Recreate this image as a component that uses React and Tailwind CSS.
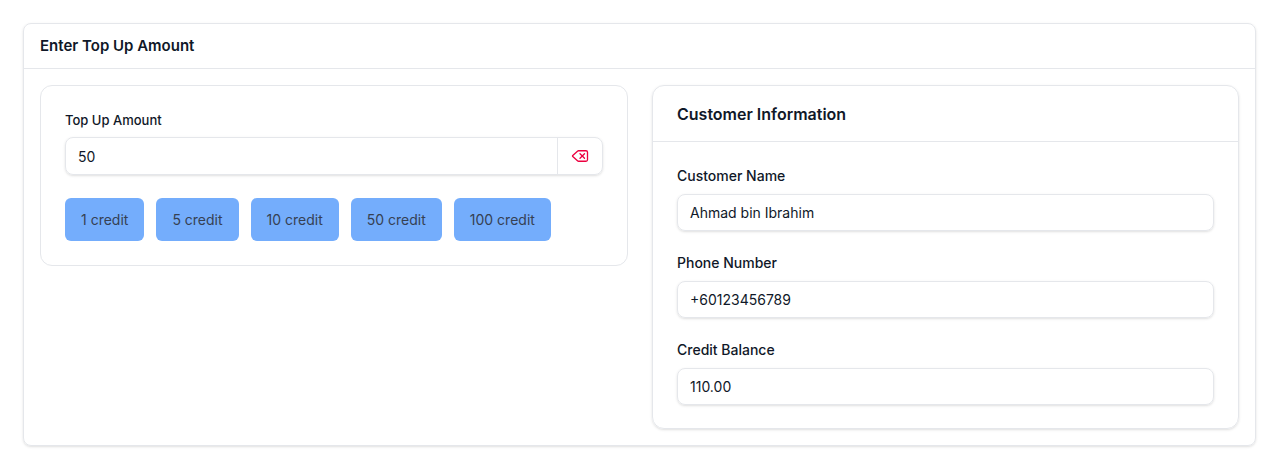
import { Delete } from "lucide-react";

const Field = ({ label, value }) => (
  <div className="flex flex-col">
    <div className="text-[14px] font-medium text-gray-900 leading-[20px] mb-[8px]">{label}</div>
    <div className="h-[37px] border border-gray-200 rounded-lg shadow-sm flex items-center px-[12px] text-[14px] text-gray-900">{value}</div>
  </div>
);

export default function App() {
  const credits = ["1 credit", "5 credit", "10 credit", "50 credit", "100 credit"];
  return (
    <div className="bg-white p-[23px] pr-[24px]" style={{ fontFamily: "Inter, 'Noto Sans', sans-serif" }}>
      <div className="border border-gray-200 rounded-lg shadow-sm">
        <div className="h-[45px] border-b border-gray-200 flex items-center px-[16px] text-[15px] font-semibold text-gray-900">Enter Top Up Amount</div>
        <div className="p-[16px] flex gap-[24px] items-start">
          <div className="w-[588px] border border-gray-200 rounded-xl px-[24px] pt-[24px] pb-[24px]">
            <div className="text-[13px] font-medium text-gray-900 leading-[20px] mb-[7px]">Top Up Amount</div>
            <div className="h-[38px] border border-gray-200 rounded-lg shadow-sm flex items-center">
              <div className="flex-1 px-[12px] text-[14px] text-gray-900">50</div>
              <div className="w-[45px] h-full border-l border-gray-200 flex items-center justify-center">
                <Delete className="w-[18px] h-[18px] text-rose-600" strokeWidth={1.75} />
              </div>
            </div>
            <div className="flex gap-[12px] mt-[23px]">
              {credits.map((c) => (
                <div key={c} className="h-[43px] px-[16px] rounded-md bg-[#74adfc] text-[14px] text-gray-700 flex items-center">{c}</div>
              ))}
            </div>
          </div>
          <div className="flex-1 border border-gray-200 rounded-xl shadow-sm">
            <div className="h-[56px] border-b border-gray-200 flex items-center px-[24px] text-[16px] font-semibold text-gray-900">Customer Information</div>
            <div className="px-[24px] pt-[24px] pb-[23px] flex flex-col gap-[22px]">
              <Field label="Customer Name" value="Ahmad bin Ibrahim" />
              <Field label="Phone Number" value="+60123456789" />
              <Field label="Credit Balance" value="110.00" />
            </div>
          </div>
        </div>
      </div>
    </div>
  );
}
